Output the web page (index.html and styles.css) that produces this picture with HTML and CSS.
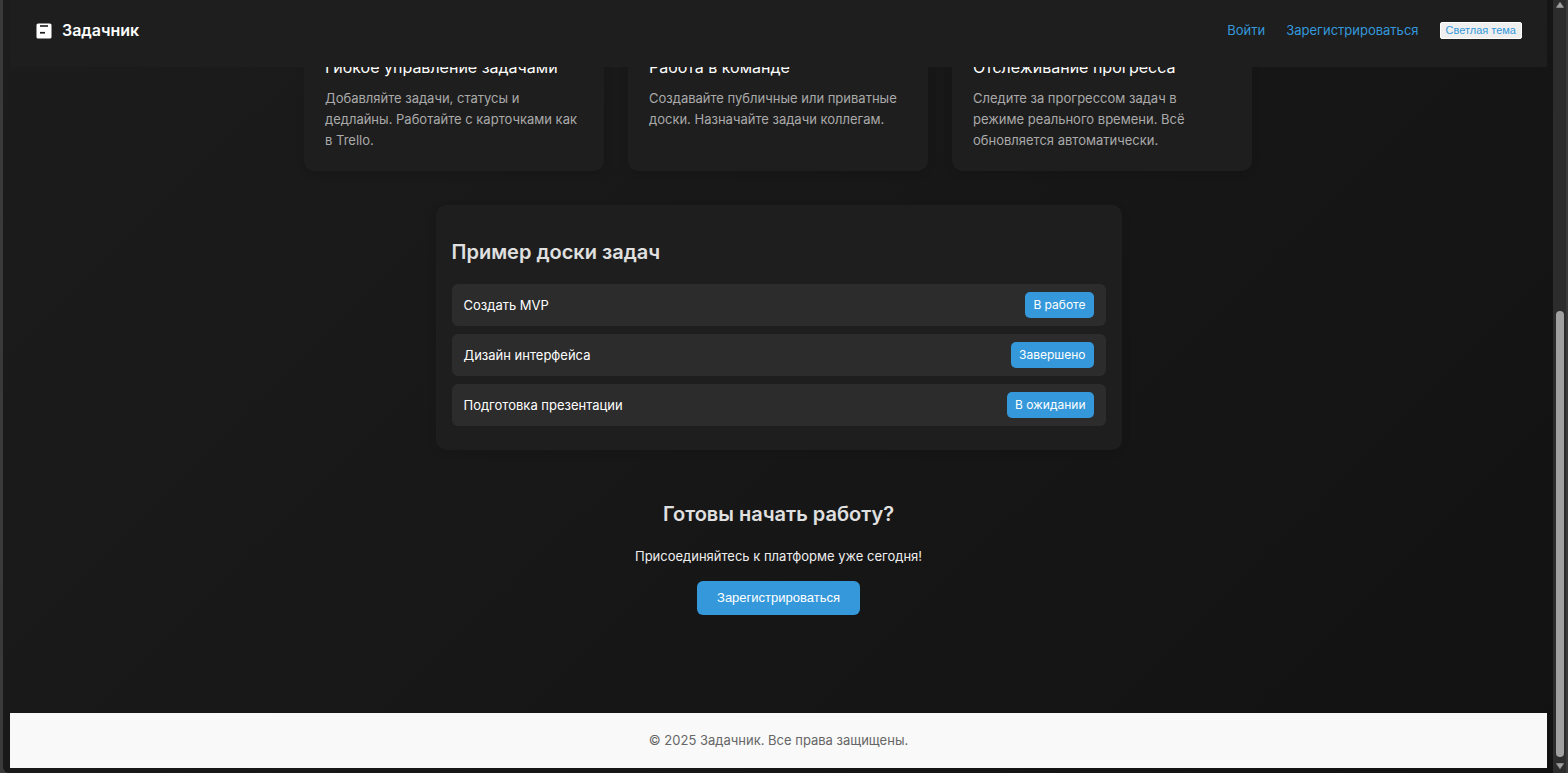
FILE: index.html
```html
<!DOCTYPE html>
<html lang="ru">
<head>
<meta charset="utf-8">
<title>Задачник</title>
<link rel="stylesheet" href="styles.css">
</head>
<body>
<div class="viewport">
  <header class="header">
    <div class="brand">
      <svg class="brand-icon" viewBox="0 0 16 16" aria-hidden="true">
        <rect x="0.5" y="0.5" width="15" height="15" rx="1.6" fill="#fff"/>
        <rect x="4" y="2.2" width="8" height="1.6" fill="#1e1e1e"/>
        <rect x="4" y="8.9" width="5" height="1.7" fill="#1e1e1e"/>
      </svg>
      <span>Задачник</span>
    </div>
    <nav class="nav">
      <a href="#login">Войти</a>
      <a href="#register">Зарегистрироваться</a>
      <button class="theme-toggle" type="button">Светлая тема</button>
    </nav>
  </header>
  <main class="main">
    <section class="features">
      <article class="card">
        <h3>Гибкое управление задачами</h3>
        <p>Добавляйте задачи, статусы и дедлайны. Работайте с карточками как в Trello.</p>
      </article>
      <article class="card">
        <h3>Работа в команде</h3>
        <p>Создавайте публичные или приватные доски. Назначайте задачи коллегам.</p>
      </article>
      <article class="card">
        <h3>Отслеживание прогресса</h3>
        <p>Следите за прогрессом задач в режиме реального времени. Всё обновляется автоматически.</p>
      </article>
    </section>
    <section class="board">
      <h2>Пример доски задач</h2>
      <ul class="tasks">
        <li><span>Создать MVP</span><span class="badge">В работе</span></li>
        <li><span>Дизайн интерфейса</span><span class="badge">Завершено</span></li>
        <li><span>Подготовка презентации</span><span class="badge">В ожидании</span></li>
      </ul>
    </section>
    <section class="cta">
      <h2>Готовы начать работу?</h2>
      <p>Присоединяйтесь к платформе уже сегодня!</p>
      <button class="primary" type="button">Зарегистрироваться</button>
    </section>
  </main>
  <footer class="footer">© 2025 Задачник. Все права защищены.</footer>
</div>
<div class="scrollbar" aria-hidden="true">
  <svg class="arrow" viewBox="0 0 8 6"><path d="M4 0.3 7.6 5.4H.4Z" fill="#a0a0a0" stroke="#a0a0a0" stroke-width=".6" stroke-linejoin="round"/></svg>
  <div class="track"><div class="thumb"></div></div>
  <svg class="arrow" viewBox="0 0 8 6"><path d="M4 5.7 7.6.6H.4Z" fill="#a0a0a0" stroke="#a0a0a0" stroke-width=".6" stroke-linejoin="round"/></svg>
</div>
</body>
</html>
```
FILE: styles.css
```css
* { box-sizing: border-box; }

body {
  margin: 0;
  height: 100vh;
  display: flex;
  overflow: hidden;
  padding: 0 2px 0 3px;
  background: #3a3a3a;
  color: #fff;
  font: 13px/21px Inter, sans-serif;
}

h2, h3, p, ul { margin: 0; padding: 0; }

.viewport {
  flex: 1;
  min-width: 0;
  display: flex;
  flex-direction: column;
  padding: 0 6px 5px 7px;
  background: linear-gradient(135deg, #1c1c1c, #121212);
  border-bottom-left-radius: 6px;
}

.header {
  position: relative;
  z-index: 1;
  flex: none;
  display: flex;
  align-items: center;
  justify-content: space-between;
  padding: 20px 25px 26px 26px;
  background: #1e1e1e;
}

.brand {
  display: flex;
  align-items: center;
  gap: 10px;
  font-size: 16px;
  font-weight: 600;
}

.brand-icon { width: 16px; height: 16px; }

.nav { display: flex; align-items: center; gap: 21px; }

.nav a { color: #3498db; text-decoration: none; }

.theme-toggle {
  padding: 1px 5px;
  border: 1px solid #fff;
  border-radius: 2px;
  background: #efefef;
  color: #3498db;
  font: 11px/13px "Liberation Sans", Arial, sans-serif;
}

.main { flex: 1; min-height: 0; }

.features {
  display: grid;
  grid-template-columns: repeat(3, 300px);
  gap: 24px;
  justify-content: center;
  margin-top: -30px;
  padding-right: 1px;
}

.card {
  padding: 20px 24px 20px 21px;
  border-radius: 10px;
  background: #1e1e1e;
  box-shadow: 0 3px 8px rgba(0, 0, 0, 0.1);
  color: #aaa;
}

.card h3 {
  margin-bottom: 10px;
  color: #fff;
  font-size: 16px;
  font-weight: 400;
}

.board {
  max-width: 686px;
  margin: 34px auto 0;
  padding: 35px 16px 24px;
  border-radius: 10px;
  background: #1e1e1e;
  box-shadow: 0 3px 8px rgba(0, 0, 0, 0.1);
}

h2 {
  color: #e0e0e0;
  font-size: 20px;
  font-weight: 600;
  line-height: 24px;
}

.tasks {
  display: flex;
  flex-direction: column;
  gap: 8px;
  margin-top: 20px;
  list-style: none;
}

.tasks li {
  display: flex;
  align-items: center;
  justify-content: space-between;
  padding: 8px 12px;
  border-radius: 6px;
  background: #2c2c2c;
}

.badge {
  padding: 3px 8px;
  border-radius: 5px;
  background: #3498db;
  font-size: 12px;
  line-height: 20px;
}

.cta {
  display: flex;
  flex-direction: column;
  align-items: center;
  padding-top: 52px;
}

.cta p { margin: 20px 0 14px; color: #eee; }

.primary {
  padding: 7px 20px;
  border: 0;
  border-radius: 6px;
  background: #3498db;
  color: #fff;
  font: 13px/20px "Liberation Sans", Arial, sans-serif;
}

.footer {
  flex: none;
  padding: 17px;
  background: #f9f9f9;
  color: #666;
  text-align: center;
}

.scrollbar {
  flex: none;
  width: 13px;
  display: flex;
  flex-direction: column;
  align-items: center;
  gap: 6px;
  padding: 2px 0 4px;
  background: #2c2c2c;
}

.arrow { width: 8px; height: 6px; }

.track {
  flex: 1;
  width: 8px;
  display: flex;
  flex-direction: column;
  justify-content: flex-end;
}

.thumb {
  height: 60%;
  border-radius: 4px;
  background: #a0a0a0;
}
```
